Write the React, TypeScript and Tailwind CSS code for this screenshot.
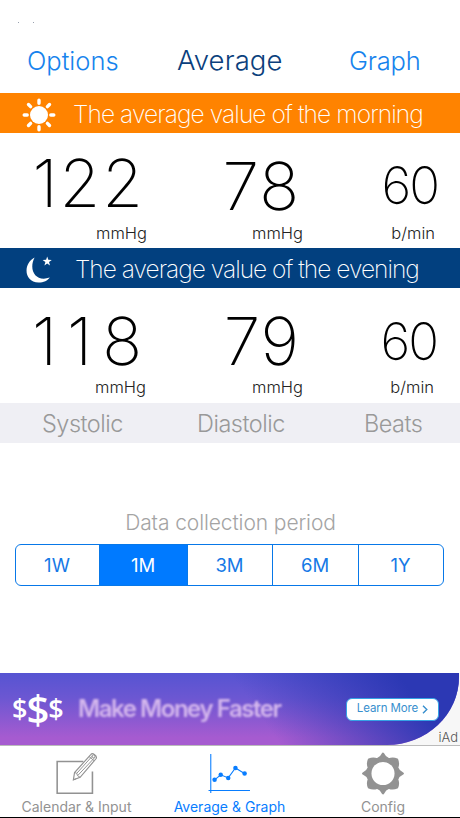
import React from "react";

interface ReadingProps {
  value: string;
  unit: string;
  valueClass: string;
  unitClass: string;
}

const Reading: React.FC<ReadingProps> = ({ value, unit, valueClass, unitClass }) => {
  return (
    <div className="flex flex-col items-end">
      <span className={`flex items-center leading-none text-black ${valueClass}`}>{value}</span>
      <span className={`text-[16.5px] leading-5 font-light text-[#222] ${unitClass}`}>{unit}</span>
    </div>
  );
};

const SunIcon = () => (
  <svg width="34" height="34" viewBox="0 0 34 34" fill="none" stroke="#fff">
    <circle cx="17" cy="17" r="9" fill="#fff" stroke="none" />
    <g strokeWidth="3.4" strokeLinecap="round">
      <path d="M17 2.2v3M17 28.8v3M2.2 17h3M28.8 17h3M6.5 6.5l2.1 2.1M25.4 25.4l2.1 2.1M6.5 27.5l2.1-2.1M25.4 8.6l2.1-2.1" />
    </g>
  </svg>
);

const MoonIcon = () => (
  <svg width="28" height="28" viewBox="0 0 28 28" fill="#fff">
    <path d="M8.6 1.6C-3.2 8-2.2 25.8 12.6 26.6C17.6 26.6 21.8 24.6 23.8 21.6C9.6 26.6 2.2 14 8.6 1.6Z" />
    <path d="M21.2.6l1.1 3.2 3.5.1-2.8 2.1 1 3.4-2.8-2-2.8 2 1-3.4-2.8-2.1 3.5-.1Z" />
  </svg>
);

const CalendarIcon = () => (
  <svg width="44" height="44" viewBox="0 0 44 44" fill="none" stroke="#929292">
    <path d="M28.5 9.7H1.7v32.6h36.1V20" strokeWidth="1.6" />
    <path d="M18.3 28.5l1.2-7.5L36.3 2.4c1.5-2 6.7 1.5 5.3 4.3L25.2 25.9Z" fill="#fff" strokeWidth="1.2" />
    <path d="M19.5 21l2.3.8.6 2.3 2.8 1.8M21.8 21.8L38 3.8M22.8 24L40.3 5.5M34.3 4.6l5.3 4.4M18.3 28.5l2.7-1" strokeWidth="1" />
    <circle cx="38.9" cy="4.4" r="1.5" strokeWidth="1" />
  </svg>
);

const GraphIcon = () => (
  <svg width="43" height="40" viewBox="0 0 43 40" fill="none" stroke="#087dff">
    <path d="M2.3 0v40M0 37.5h42.5" strokeWidth="1.1" />
    <path d="M6.2 26.5l6.3-5.2 7.7 3.2 7.4-10.2 9.3 5.7" strokeWidth="1.1" />
    <g fill="#087dff" stroke="none">
      <circle cx="6.2" cy="26.5" r="2.3" />
      <circle cx="12.5" cy="21.3" r="2.3" />
      <circle cx="20.2" cy="24.5" r="2.3" />
      <circle cx="27.6" cy="14.3" r="2.3" />
      <circle cx="37" cy="20" r="2.3" />
    </g>
  </svg>
);

const GearIcon = () => (
  <svg width="44" height="44" viewBox="0 0 44 44">
    <path
      d="M22 1.8Q24 6.3 28 7.6Q32 5.8 36.3 7.7Q38.2 12 36.4 16Q37.7 20 42.2 22Q37.7 24 36.4 28Q38.2 32 36.3 36.3Q32 38.2 28 36.4Q24 37.7 22 42.2Q20 37.7 16 36.4Q12 38.2 7.7 36.3Q5.8 32 7.6 28Q6.3 24 1.8 22Q6.3 20 7.6 16Q5.8 12 7.7 7.7Q12 5.8 16 7.6Q20 6.3 22 1.8Z"
      fill="#929292"
      stroke="#929292"
      strokeWidth="2.4"
      strokeLinejoin="round"
    />
    <circle cx="22" cy="22" r="11.8" fill="#fff" />
  </svg>
);

const periods = [
  { label: "1W", width: "w-[83px]" },
  { label: "1M", width: "w-[88px]" },
  { label: "3M", width: "w-[85px]" },
  { label: "6M", width: "w-[86px]" },
  { label: "1Y", width: "flex-1" },
];

export default function App() {
  const selected = "1M";

  return (
    <div className="flex h-[818px] w-[460px] flex-col overflow-hidden bg-white font-['Inter','Liberation_Sans',sans-serif]">
      <div className="flex h-[29px] shrink-0 items-start gap-[14px] pt-[22px] pl-[18px]">
        <i className="h-px w-px bg-gray-400" />
        <i className="h-px w-px bg-gray-400" />
      </div>

      <header className="flex h-16 shrink-0 items-center pl-[27px] whitespace-nowrap text-[#1683ed]">
        <button className="w-[150px] text-left text-[25.5px] font-light">Options</button>
        <h1 className="w-[172px] text-[27.5px] font-light tracking-[0.1px] text-[#0b3f7d]">Average</h1>
        <button className="text-left text-[25.5px] font-light tracking-[-0.2px]">Graph</button>
      </header>

      <div className="flex h-10 shrink-0 items-center bg-[#ff8300] pl-[22px] whitespace-nowrap text-white">
        <div className="w-[51px] pt-1"><SunIcon /></div>
        <span className="pt-[2px] text-[24.5px] font-extralight tracking-[-0.9px]">The average value of the morning</span>
      </div>

      <section className="grid h-[115px] shrink-0 grid-cols-[147px_156px_157px]">
        <Reading value="122" unit="mmHg" valueClass="h-[90px] pt-[10px] pr-[2px] text-[66px] font-extralight tracking-[2px]" unitClass="" />
        <Reading value="78" unit="mmHg" valueClass="h-[90px] pt-[16px] pr-[3px] text-[66px] font-extralight tracking-[1px]" unitClass="" />
        <Reading value="60" unit="b/min" valueClass="h-[90px] pt-[15px] pr-[22px] text-[51px] font-[150] tracking-[-2px]" unitClass="pr-[25px]" />
      </section>

      <div className="flex h-10 shrink-0 items-center bg-[#02407f] pl-[26px] whitespace-nowrap text-white">
        <div className="w-[49px] pt-1"><MoonIcon /></div>
        <span className="pt-[2px] text-[24.5px] font-extralight tracking-[-0.98px]">The average value of the evening</span>
      </div>

      <section className="grid h-[115px] shrink-0 grid-cols-[146px_157px_157px]">
        <Reading value="118" unit="mmHg" valueClass="h-[89px] pt-[17px] text-[66px] font-extralight tracking-[10px] -mr-[6px]" unitClass="" />
        <Reading value="79" unit="mmHg" valueClass="h-[89px] pt-[17px] pr-[3px] text-[66px] font-extralight tracking-[1px]" unitClass="" />
        <Reading value="60" unit="b/min" valueClass="h-[89px] pt-[17px] pr-[23px] text-[51px] font-[150] tracking-[-2px]" unitClass="pr-[26px]" />
      </section>

      <div className="flex h-10 shrink-0 items-center bg-[#efeff4] pt-[2px] pl-[42px] text-[23.5px] font-light tracking-[-0.5px] text-[#999]">
        <span className="w-[155px]">Systolic</span>
        <span className="w-[167px]">Diastolic</span>
        <span>Beats</span>
      </div>

      <main className="flex h-[230px] shrink-0 flex-col pt-[65px] pl-[15px]">
        <h2 className="h-[36px] w-[431px] text-center text-[21px] leading-[30px] font-light tracking-[-0.1px] text-[#a4a4a4]">Data collection period</h2>
        <div className="flex h-[42px] w-[429px] overflow-hidden rounded-md border border-[#0878e8]">
          {periods.map((p, i) => (
            <button
              key={p.label}
              className={`${p.width} shrink-0 pt-[2px] pr-[1px] text-[18.5px] ${i > 0 ? "border-l border-[#0878e8]" : ""} ${
                p.label === selected ? "bg-[#007aff] text-white" : "text-[#1679e6]"
              }`}
            >
              {p.label}
            </button>
          ))}
        </div>
      </main>

      <aside className="relative h-[73px] shrink-0 border-b border-[#bbb] bg-[#f7f7f7]">
        <div className="flex h-[72px] w-[459px] items-center overflow-hidden rounded-br-[72px_68px] bg-[linear-gradient(180deg,#5654d2_0%,#6c57d2_35%,#a65bd0_90%)]">
          <div className="flex h-full w-full items-center bg-[linear-gradient(55deg,transparent_55%,#2c38b4_88%)] pl-[12px]">
            <div className="flex w-[66px] items-center font-['Open_Sans',sans-serif] font-semibold tracking-[-1px] text-white">
              <span className="text-[27px]">$</span>
              <span className="text-[40px] leading-[60px]">$</span>
              <span className="text-[27px]">$</span>
            </div>
            <span className="w-[268px] text-[24px] font-semibold tracking-[-1.45px] whitespace-nowrap text-[#d5b8ed] blur-[1.3px]">Make Money Faster</span>
            <button className="flex h-[23px] w-[93px] shrink-0 items-center justify-center gap-1 rounded-md border border-[#35a2e5] bg-white text-[11.5px] tracking-[-0.1px] whitespace-nowrap text-[#388fce]">
              Learn More
              <svg width="6" height="9" viewBox="0 0 6 9" fill="none" stroke="#388fce" strokeWidth="1.4">
                <path d="M1 .8l3.8 3.7L1 8.2" />
              </svg>
            </button>
          </div>
        </div>
        <span className="absolute right-[2px] bottom-0 text-[13px] leading-4 font-light text-[#555]">iAd</span>
      </aside>

      <nav className="flex h-[72px] shrink-0 border-b border-black text-[14px] text-[#929292]">
        <div className="flex w-[153px] flex-col items-center pt-[6px]">
          <CalendarIcon />
          <span className="pt-[2px] leading-5">Calendar & Input</span>
        </div>
        <div className="flex w-[153px] flex-col items-center pt-[8px] text-[#087dff]">
          <GraphIcon />
          <span className="pt-[4px] leading-5">Average & Graph</span>
        </div>
        <div className="flex w-[154px] flex-col items-center pt-[6px]">
          <GearIcon />
          <span className="pt-[2px] leading-5">Config</span>
        </div>
      </nav>
    </div>
  );
}
